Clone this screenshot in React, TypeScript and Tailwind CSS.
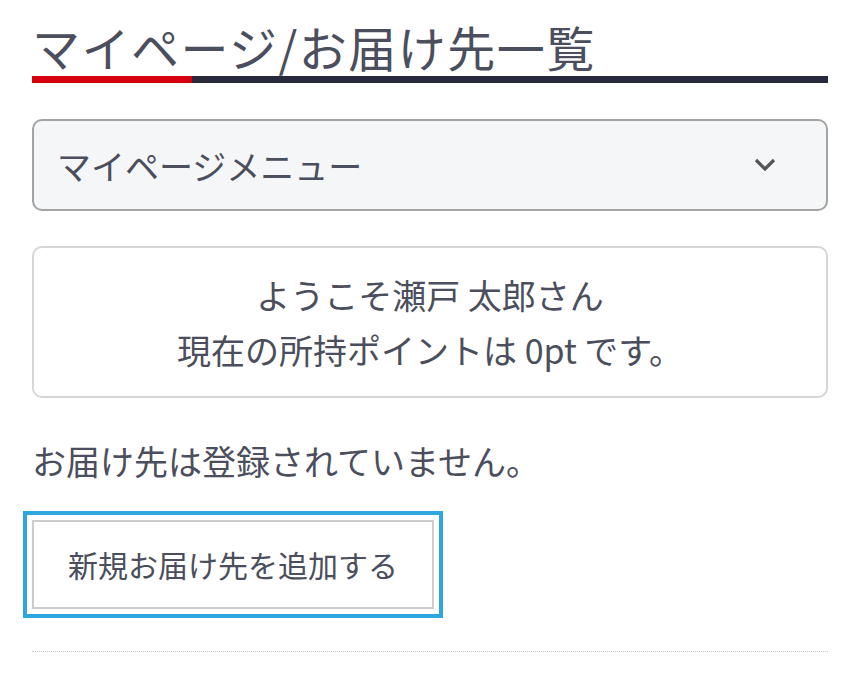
import React from 'react';

const App: React.FC = () => {
  return (
    <div className="min-h-screen bg-white pl-[32px] pr-[24px] pt-[17px] text-[#4b4e5c]" style={{ fontFamily: '"Noto Sans CJK JP", "Noto Sans", sans-serif' }}>
      {/* Page title */}
      <h1 className="text-[48px] leading-[59px] font-normal tracking-[1.5px]">マイページ/お届け先一覧</h1>
      <div className="flex h-[7px]">
        <div className="w-[160px] bg-[#d7000f]" />
        <div className="flex-1 bg-[#262a3b]" />
      </div>

      {/* My page menu */}
      <button className="mt-[36px] flex h-[92px] w-full items-center justify-between rounded-[10px] border-2 border-[#a3a3a3] bg-[#f5f6f8] pl-[23px] pr-[50px]">
        <span className="text-[34px]">マイページメニュー</span>
        <svg width="22" height="14" viewBox="0 0 22 14" fill="none" className="text-[#555]">
          <path d="M2 2l9 9 9-9" stroke="currentColor" strokeWidth="3.2" />
        </svg>
      </button>

      {/* Welcome */}
      <div className="mt-[35px] flex h-[152px] flex-col items-center justify-center rounded-[10px] border-2 border-[#d6d6d6] text-[34px] leading-[55px]">
        <p>ようこそ瀬戸 太郎さん</p>
        <p>現在の所持ポイントは 0pt です。</p>
      </div>

      <p className="mt-[35px] text-[34px] leading-[55px]">お届け先は登録されていません。</p>

      <div className="mt-[32px]">
        <button className="h-[89px] w-[402px] border-2 border-[#cccccc] bg-white text-[30px] outline-4 outline-offset-[5px] outline-[#2ea6df]">
          新規お届け先を追加する
        </button>
      </div>

      <div className="mt-[42px] border-t border-dotted border-[#c8c8c8]" />
    </div>
  );
};

export default App;
